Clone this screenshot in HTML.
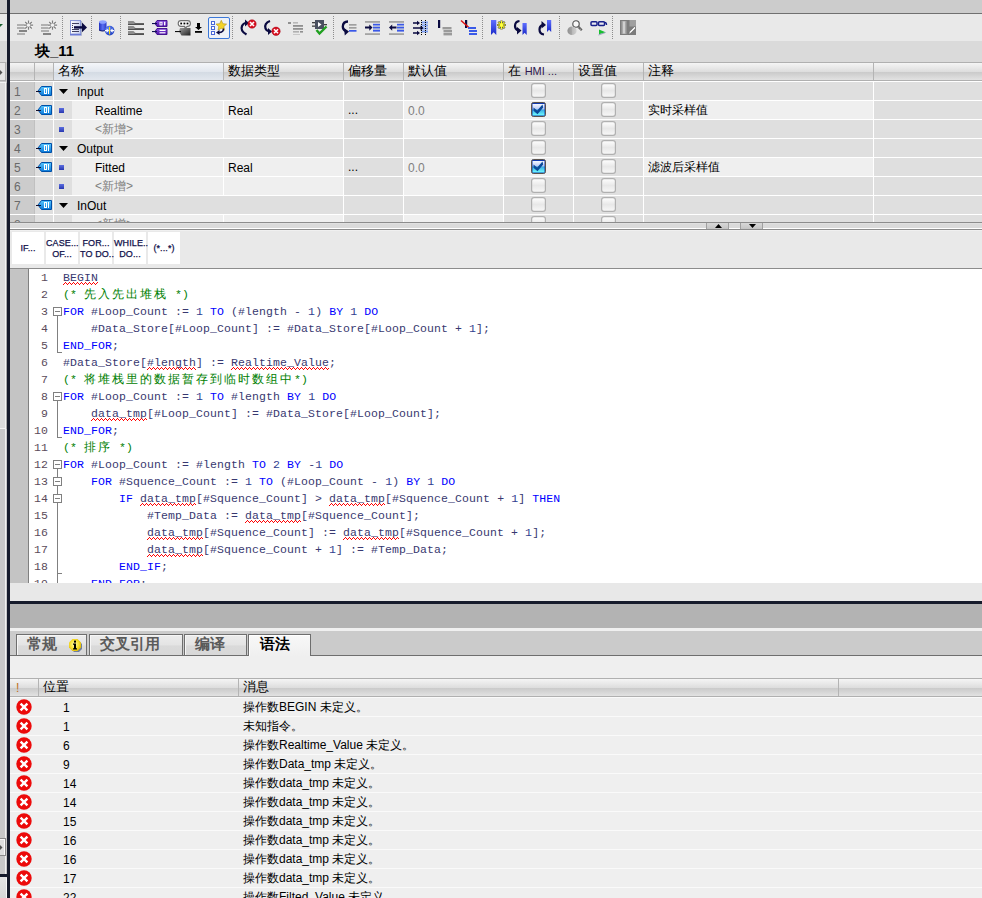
<!DOCTYPE html><html><head><meta charset="utf-8"><style>
*{margin:0;padding:0;box-sizing:border-box}
html,body{width:982px;height:898px;overflow:hidden;background:#c8c8c8;font-family:"Liberation Sans",sans-serif;font-size:11px;color:#000}
.a{position:absolute}
.t{position:absolute;white-space:pre;line-height:1}
svg{position:absolute;overflow:visible}

.code{font-family:"Liberation Mono",monospace;font-size:11.5px;letter-spacing:0.1px;color:#383870}
.ln{font-family:"Liberation Mono",monospace;font-size:11.5px;letter-spacing:0.1px;color:#5a4a5a}
.kw{color:#0000ff}
.nm{color:#304090}
.sq{}
.cj{display:inline-block;width:14px;font-size:12px;letter-spacing:0}
</style></head><body><div class="a" style="left:0px;top:0px;width:7px;height:13px;background:#cccccc"></div><div class="a" style="left:0px;top:13px;width:7px;height:1px;background:#707070"></div><div class="a" style="left:0px;top:14px;width:7px;height:27px;background:#e8e8e8"></div><div class="a" style="left:0px;top:41px;width:7px;height:21px;background:#d8d8d8"></div><div class="a" style="left:0px;top:62px;width:6px;height:19px;background:#e4e4e4;border:1px solid #b0b0b0;border-left:none"></div><div class="a" style="left:0px;top:82px;width:6px;height:347px;background:#dcdcdc;border:1px solid #f4f4f4;border-left:none;box-shadow:1px 1px 0 #a8a8a8"></div><div class="a" style="left:0px;top:429px;width:7px;height:445px;background:#c8c8c8"></div><div class="a" style="left:5px;top:429px;width:1px;height:445px;background:#f0f0f0"></div><div class="a" style="left:0px;top:838px;width:6px;height:18px;background:#dedede;border:1px solid #8a8a8a;border-left:none;box-shadow:inset -1px 1px 0 #fafafa"></div><div class="a" style="left:0px;top:874px;width:7px;height:3px;background:#161b2b"></div><div class="a" style="left:0px;top:877px;width:7px;height:21px;background:linear-gradient(#e4e4e4,#d8d8d8)"></div><div class="a" style="left:6px;top:878px;width:1px;height:20px;background:#f8f8f8"></div><svg style="left:0px;top:24px" width="3" height="4"><path d="M0 0H3L0 3Z" fill="#1a6030"/></svg><svg style="left:0px;top:70px" width="3" height="5"><path d="M0 0L2.5 2.5L0 5Z" fill="#505050"/></svg><svg style="left:0px;top:845px" width="3" height="5"><path d="M0 0L2.5 2.5L0 5Z" fill="#505050"/></svg><div class="a" style="left:7px;top:0px;width:3px;height:898px;background:#161b2b"></div><div class="a" style="left:10px;top:0px;width:972px;height:13px;background:#cccccc"></div><div class="a" style="left:10px;top:13px;width:972px;height:1px;background:#707070"></div><div class="a" style="left:10px;top:14px;width:972px;height:27px;background:#e9e9e9"></div><svg style="left:17px;top:20px" width="18" height="16" viewBox="0 0 18 16"><rect x="0" y="4" width="8" height="2" fill="#b0b0b0"/><rect x="0" y="7" width="8" height="2" fill="#b0b0b0"/><rect x="2" y="10" width="8" height="2" fill="#848484"/><rect x="0" y="13" width="8" height="2" fill="#b0b0b0"/><circle cx="11.5" cy="5.2" r="4.6" fill="#f4f4f4" opacity="0.9"/><path d="M13.10 5.20L16.10 5.20M12.63 6.33L14.75 8.45M11.50 6.80L11.50 9.80M10.37 6.33L8.25 8.45M9.90 5.20L6.90 5.20M10.37 4.07L8.25 1.95M11.50 3.60L11.50 0.60M12.63 4.07L14.75 1.95" stroke="#7c7c7c" stroke-width="1.25"/></svg><svg style="left:41px;top:20px" width="18" height="16" viewBox="0 0 18 16"><rect x="0" y="4" width="8" height="2" fill="#b0b0b0"/><rect x="0" y="7" width="8" height="2" fill="#b0b0b0"/><rect x="0" y="10" width="8" height="2" fill="#b0b0b0"/><rect x="2" y="13" width="8" height="2" fill="#848484"/><circle cx="11.5" cy="5.2" r="4.6" fill="#f4f4f4" opacity="0.9"/><path d="M13.10 5.20L16.10 5.20M12.63 6.33L14.75 8.45M11.50 6.80L11.50 9.80M10.37 6.33L8.25 8.45M9.90 5.20L6.90 5.20M10.37 4.07L8.25 1.95M11.50 3.60L11.50 0.60M12.63 4.07L14.75 1.95" stroke="#7c7c7c" stroke-width="1.25"/></svg><div class="a" style="left:62px;top:16px;width:1px;height:23px;background:repeating-linear-gradient(#8c8c8c 0 1px,transparent 1px 2px)"></div><svg style="left:70px;top:20px" width="18" height="16" viewBox="0 0 18 16">
<defs><linearGradient id="dag" x1="0" x2="1"><stop offset="0" stop-color="#ffffff"/><stop offset="1" stop-color="#c8d0f0"/></linearGradient></defs>
<rect x="0.5" y="0.5" width="10" height="13.5" fill="url(#dag)" stroke="#8a98d8"/>
<rect x="0" y="14" width="11.5" height="1.5" fill="#6a7ad8"/>
<path d="M11.5 1 V15.5" stroke="#a8b0c8" fill="none"/>
<rect x="2" y="3" width="7" height="1" fill="#404060"/>
<rect x="2" y="5" width="1" height="1" fill="#404060"/>
<rect x="2" y="7" width="1" height="1" fill="#404060"/>
<rect x="2" y="9" width="7" height="1" fill="#404060"/>
<rect x="2" y="11" width="7" height="1" fill="#404060"/>
<rect x="4" y="6.2" width="9" height="2.4" fill="#0a0a40"/>
<path d="M12 2.5 L17 7.4 L12 12.3Z" fill="#0a0a40"/>
</svg><div class="a" style="left:91px;top:16px;width:1px;height:23px;background:repeating-linear-gradient(#8c8c8c 0 1px,transparent 1px 2px)"></div><svg style="left:99px;top:20px" width="18" height="16" viewBox="0 0 18 16">
<defs><linearGradient id="dbg" x1="0" x2="1"><stop offset="0" stop-color="#2030c0"/><stop offset="0.5" stop-color="#5a70f0"/><stop offset="1" stop-color="#2838c8"/></linearGradient>
<radialGradient id="dbc" cx="0.4" cy="0.35" r="0.7"><stop offset="0" stop-color="#6a90ff"/><stop offset="1" stop-color="#1838c0"/></radialGradient></defs>
<path d="M0 2 V10 Q3.5 12 7.5 10 V2 Z" fill="url(#dbg)"/>
<ellipse cx="3.75" cy="2" rx="3.75" ry="1.8" fill="#8aa0ff"/>
<path d="M0 9.5 Q3.5 11.5 7.5 9.5 V10.5 Q3.5 12.5 0 10.5Z" fill="#101870"/>
<circle cx="10.6" cy="10.6" r="4.8" fill="url(#dbc)"/>
<path d="M6 10.6H9.2M12 10.6H15.2" stroke="#fff" stroke-width="1.3" fill="none"/>
<path d="M7.6 8.4L10 10.6L7.6 12.8Z M13.6 8.4L11.2 10.6L13.6 12.8Z" fill="#fff"/>
<rect x="10.1" y="6.8" width="1" height="7.6" fill="#ffe000"/>
</svg><div class="a" style="left:120px;top:16px;width:1px;height:23px;background:repeating-linear-gradient(#8c8c8c 0 1px,transparent 1px 2px)"></div><svg style="left:128px;top:20px" width="17" height="16" viewBox="0 0 17 16"><path d="M0 1 H5.5 L7.5 3 V5 H0Z" fill="#8e8e8e"/><rect x="6.5" y="3" width="9.5" height="2" fill="#636363"/><rect x="0" y="4" width="16" height="1" fill="#505050"/><path d="M0 6 H5.5 L7.5 8 V10 H0Z" fill="#8e8e8e"/><rect x="6.5" y="8" width="9.5" height="2" fill="#636363"/><rect x="0" y="9" width="16" height="1" fill="#505050"/><path d="M0 11 H5.5 L7.5 13 V15 H0Z" fill="#8e8e8e"/><rect x="6.5" y="13" width="9.5" height="2" fill="#636363"/><rect x="0" y="14" width="16" height="1" fill="#505050"/></svg><svg style="left:152px;top:20px" width="17" height="16" viewBox="0 0 17 16"><defs><linearGradient id="ptg" x1="0" y1="0" x2="0" y2="1"><stop offset="0" stop-color="#8a50e0"/><stop offset="1" stop-color="#5010a8"/></linearGradient></defs><path d="M5 0.5 H15 V6.5 H5 L3 3.5Z" fill="url(#ptg)" stroke="#3a0888" stroke-width="0.9"/><rect x="0" y="3" width="5" height="1.1" fill="#101050"/><path d="M5 8.5 H15 V14.5 H5 L3 11.5Z" fill="url(#ptg)" stroke="#3a0888" stroke-width="0.9"/><rect x="0" y="11" width="5" height="1.1" fill="#101050"/><rect x="7.5" y="1.8" width="3" height="3.6" fill="#fff"/><rect x="8.5" y="2.7" width="1" height="1.8" fill="#6a30c0"/><rect x="12" y="1.8" width="1.4" height="3.6" fill="#fff"/><rect x="7.5" y="9.8" width="6" height="1.2" fill="#fff"/><rect x="7.5" y="12.2" width="6" height="1.2" fill="#fff"/></svg><svg style="left:175px;top:20px" width="28" height="16" viewBox="0 0 28 16">
<defs><linearGradient id="chb" x1="0" y1="0" x2="1" y2="1"><stop offset="0" stop-color="#a0a0a0"/><stop offset="1" stop-color="#202020"/></linearGradient></defs>
<path d="M5 8 H15.5 V15.5 H6.5 L4 11.5Z" fill="url(#chb)"/>
<path d="M6 0.6 H12.5 Q15.4 0.6 15.4 3.5 Q15.4 6.4 12.5 6.4 H12 L10 9 L9.8 6.4 H6 Q3.2 6.4 3.2 3.5 Q3.2 0.6 6 0.6Z" fill="#fff" stroke="#707070" stroke-width="1.1"/>
<rect x="5.3" y="2.6" width="1.8" height="1.8" fill="#000"/><rect x="8.5" y="2.6" width="1.8" height="1.8" fill="#000"/><rect x="11.6" y="2.6" width="1.8" height="1.8" fill="#000"/>
<rect x="0" y="11" width="6" height="1.1" fill="#101010"/>
<path d="M22 3 V7 H20 L23.5 10 L27 7 H25 V3Z" fill="#000"/>
<rect x="20" y="11" width="7" height="1.8" fill="#000"/>
</svg><div class="a" style="left:208px;top:17px;width:22px;height:22px;border:1.5px solid #3c78d8;border-radius:2px;background:#eef2f8"></div><svg style="left:210px;top:20px" width="17" height="16" viewBox="0 0 17 16">
<rect x="1.5" y="1.5" width="3" height="3" fill="#fff" stroke="#4a68d8"/>
<rect x="1.5" y="6.5" width="3" height="3" fill="#fff" stroke="#4a68d8"/>
<rect x="1.5" y="11.5" width="3" height="3" fill="#fff" stroke="#4a68d8"/>
<path d="M11.3 0.3 L12.9 3.7 L16.6 4.1 L13.8 6.6 L14.6 10.2 L11.3 8.3 L8 10.2 L8.8 6.6 L6 4.1 L9.7 3.7Z" fill="#f4d428" stroke="#b09018" stroke-width="0.6"/>
<path d="M13.5 8.5 Q13.5 12.5 9 12.5" stroke="#0a0a40" stroke-width="1.4" fill="none"/><path d="M6 12.5 L9.5 10 V15Z" fill="#0a0a40"/>
</svg><div class="a" style="left:232px;top:16px;width:1px;height:23px;background:repeating-linear-gradient(#8c8c8c 0 1px,transparent 1px 2px)"></div><svg style="left:239px;top:20px" width="18" height="16" viewBox="0 0 18 16">
<path d="M7.5 14.5 Q1 11 3 6 Q4.5 3 7 3" stroke="#0a0a40" stroke-width="2.2" fill="none"/>
<path d="M6 -0.5 L10 3 L6 6.5Z" fill="#0a0a40"/>
<circle cx="13" cy="4" r="4.2" fill="#d81020" stroke="#a00010" stroke-width="0.5"/>
<path d="M11 2L15 6M15 2L11 6" stroke="#fff" stroke-width="1.6"/>
</svg><svg style="left:263px;top:20px" width="18" height="16" viewBox="0 0 18 16">
<path d="M7 1 Q1 3 2.5 8.5 Q3.5 11 6 11.5" stroke="#0a0a40" stroke-width="2.2" fill="none"/>
<path d="M5 8 L9 11.5 L5 15Z" fill="#0a0a40"/>
<circle cx="13" cy="11.3" r="4.2" fill="#d81020" stroke="#a00010" stroke-width="0.5"/>
<path d="M11 9.3L15 13.3M15 9.3L11 13.3" stroke="#fff" stroke-width="1.6"/>
</svg><svg style="left:288px;top:20px" width="17" height="16" viewBox="0 0 17 16">
<rect x="0" y="2" width="3" height="2" fill="#909090"/>
<rect x="5" y="2" width="5" height="1.6" fill="#b8b8b8"/>
<rect x="5" y="5" width="10" height="1.8" fill="#909090"/>
<rect x="5" y="8" width="10" height="1.8" fill="#909090"/>
<rect x="5" y="11" width="6" height="1.6" fill="#b0b0b0"/><rect x="12" y="11" width="3" height="1.6" fill="#909090"/>
<rect x="5" y="14" width="7" height="0.8" fill="#c0c0c0"/>
</svg><svg style="left:312px;top:20px" width="17" height="16" viewBox="0 0 17 16">
<rect x="3" y="0" width="9" height="9" fill="#4a5060"/>
<path d="M6 2 L9.5 4.5 L6 7Z" fill="#fff"/>
<rect x="0" y="2" width="3" height="1.3" fill="#404040"/><rect x="0" y="5.5" width="3" height="1.3" fill="#404040"/>
<rect x="12" y="4" width="3" height="1.3" fill="#404040"/>
<path d="M4.5 10 L7.5 13.5 L14.5 6.5" stroke="#20a020" stroke-width="2.4" fill="none"/>
</svg><div class="a" style="left:333px;top:16px;width:1px;height:23px;background:repeating-linear-gradient(#8c8c8c 0 1px,transparent 1px 2px)"></div><svg style="left:341px;top:20px" width="17" height="16" viewBox="0 0 17 16">
<path d="M7 1.5 Q2 1.5 1.8 6.5 Q1.8 9.5 4.5 11" stroke="#0a0a40" stroke-width="2.3" fill="none"/>
<path d="M3 8 L8 11.5 L3.8 15.5Z" fill="#0a0a40"/>
<rect x="8" y="4" width="7.5" height="1.7" fill="#a0a0a0"/>
<rect x="8" y="7" width="7.5" height="1.7" fill="#a0a0a0"/>
<rect x="8" y="10" width="7.5" height="1.7" fill="#3a58e8"/>
</svg><svg style="left:365px;top:20px" width="17" height="16" viewBox="0 0 17 16">
<rect x="0" y="1" width="15" height="1.8" fill="#a4a4a4"/>
<rect x="8" y="3.8" width="7" height="1.8" fill="#3a58e8"/>
<rect x="8" y="6.8" width="7" height="1.8" fill="#3a58e8"/>
<rect x="8" y="9.8" width="7" height="1.8" fill="#3a58e8"/>
<rect x="8" y="5.6" width="7" height="1.2" fill="#a8b4d8"/>
<rect x="8" y="8.6" width="7" height="1.2" fill="#a8b4d8"/>
<rect x="0" y="13.2" width="15" height="1.8" fill="#a4a4a4"/>
<path d="M0 6.6H4.3V4.5L7.5 7.6L4.3 10.7V8.6H0Z" fill="#0a0a40"/></svg><svg style="left:389px;top:20px" width="17" height="16" viewBox="0 0 17 16">
<rect x="0" y="1" width="15" height="1.8" fill="#a4a4a4"/>
<rect x="8" y="3.8" width="7" height="1.8" fill="#3a58e8"/>
<rect x="8" y="6.8" width="7" height="1.8" fill="#3a58e8"/>
<rect x="8" y="9.8" width="7" height="1.8" fill="#3a58e8"/>
<rect x="8" y="5.6" width="7" height="1.2" fill="#a8b4d8"/>
<rect x="8" y="8.6" width="7" height="1.2" fill="#a8b4d8"/>
<rect x="0" y="13.2" width="15" height="1.8" fill="#a4a4a4"/>
<path d="M7.5 6.6H3.2V4.5L0 7.6L3.2 10.7V8.6H7.5Z" fill="#0a0a40"/></svg><svg style="left:413px;top:20px" width="17" height="16" viewBox="0 0 17 16"><defs><pattern id="dotv" width="1" height="2" patternUnits="userSpaceOnUse"><rect width="1" height="1" fill="#000"/></pattern></defs><rect x="8.5" y="1.5" width="6.5" height="2" fill="#7f9ff0"/><rect x="8.5" y="4.5" width="6.5" height="2" fill="#7f9ff0"/><rect x="8.5" y="7.5" width="6.5" height="2" fill="#7f9ff0"/><rect x="8.5" y="10.5" width="6.5" height="2" fill="#7f9ff0"/><path d="M0 2.2H4V0.8L7 3L4 5.2V3.8H0Z" fill="#0a0a40"/><path d="M0 7.2H7.5V5.6L10.5 8L7.5 10.4V8.8H0Z" fill="#0a0a40"/><path d="M0 12.2H4V10.8L7 13L4 15.2V13.8H0Z" fill="#0a0a40"/><rect x="8" y="0" width="1" height="16" fill="url(#dotv)"/><rect x="12" y="0" width="1" height="16" fill="url(#dotv)"/></svg><svg style="left:438px;top:20px" width="17" height="16" viewBox="0 0 17 16">
<rect x="0" y="0" width="2.2" height="8" fill="#0a0a40"/>
<rect x="4.5" y="7" width="9" height="2.4" fill="#9a9a9a"/>
<rect x="5.5" y="10" width="8.5" height="2.4" fill="#9a9a9a"/>
<rect x="5.5" y="13" width="8.5" height="2.4" fill="#9a9a9a"/>
</svg><svg style="left:461px;top:20px" width="17" height="16" viewBox="0 0 17 16">
<rect x="4" y="0" width="2.2" height="8" fill="#0a0a40"/>
<path d="M0 0.5 L9 8.5" stroke="#e01010" stroke-width="1.5"/>
<rect x="7" y="7" width="8" height="2" fill="#3a5ae8"/>
<rect x="8" y="10" width="8" height="2" fill="#3a5ae8"/>
<rect x="8" y="13" width="8" height="2" fill="#3a5ae8"/>
</svg><div class="a" style="left:482px;top:16px;width:1px;height:23px;background:repeating-linear-gradient(#8c8c8c 0 1px,transparent 1px 2px)"></div><svg style="left:491px;top:20px" width="17" height="16" viewBox="0 0 17 16"><defs><linearGradient id="bmg" x1="0" y1="0" x2="0" y2="1"><stop offset="0" stop-color="#6070ff"/><stop offset="1" stop-color="#1828c8"/></linearGradient></defs>
<path d="M0 0H5.3V15L2.65 12.3L0 15Z" fill="url(#bmg)"/>
<path d="M10.5 0.5V9.5M6 5H15M7.3 1.8L13.7 8.2M13.7 1.8L7.3 8.2" stroke="#505040" stroke-width="2.2"/>
<path d="M10.5 0.8V9.2M6.3 5H14.7M7.6 2.1L13.4 7.9M13.4 2.1L7.6 7.9" stroke="#ffff20" stroke-width="1.1"/>
<circle cx="10.5" cy="5" r="1.6" fill="#ffff40"/>
</svg><svg style="left:514px;top:20px" width="17" height="16" viewBox="0 0 17 16"><defs><linearGradient id="bmg" x1="0" y1="0" x2="0" y2="1"><stop offset="0" stop-color="#6070ff"/><stop offset="1" stop-color="#1828c8"/></linearGradient></defs>
<path d="M8.5 3H12.7V15L10.6 12.8L8.5 15Z" fill="url(#bmg)"/>
<path d="M5.5 1 Q1 1.5 1 6 Q1 9 4 10.5" stroke="#0a0a40" stroke-width="2.2" fill="none"/>
<path d="M3 7 L7.5 10.5 L3 14.5Z" fill="#0a0a40"/>
</svg><svg style="left:538px;top:20px" width="17" height="16" viewBox="0 0 17 16"><defs><linearGradient id="bmg" x1="0" y1="0" x2="0" y2="1"><stop offset="0" stop-color="#6070ff"/><stop offset="1" stop-color="#1828c8"/></linearGradient></defs>
<path d="M9 0H13.2V12L11.1 9.8L9 12Z" fill="url(#bmg)"/>
<path d="M6 14.5 Q1.5 14 1.5 9.5 Q1.5 6 4.5 5" stroke="#0a0a40" stroke-width="2.2" fill="none"/>
<path d="M3.5 1 L8 5 L3.5 8.5Z" fill="#0a0a40"/>
</svg><div class="a" style="left:559px;top:16px;width:1px;height:23px;background:repeating-linear-gradient(#8c8c8c 0 1px,transparent 1px 2px)"></div><svg style="left:567px;top:20px" width="17" height="16" viewBox="0 0 17 16">
<defs><linearGradient id="mgb" x1="0" x2="1"><stop offset="0" stop-color="#909090"/><stop offset="0.5" stop-color="#a8a8a8"/><stop offset="0.5" stop-color="#b8b8b8"/><stop offset="1" stop-color="#d0d0d0"/></linearGradient></defs>
<circle cx="9" cy="4" r="3.2" fill="#f8f8f8" stroke="#505050" stroke-width="1.1"/>
<path d="M11.2 6.6 L14.8 10.2" stroke="#606060" stroke-width="2.2"/>
<path d="M11.6 7.4 L14.2 10" stroke="#d0d0d0" stroke-width="0.8" stroke-dasharray="1 1"/>
<ellipse cx="5" cy="10.8" rx="4.6" ry="4.3" fill="url(#mgb)"/>
</svg><svg style="left:590px;top:20px" width="18" height="16" viewBox="0 0 18 16">
<rect x="1" y="1.8" width="6" height="3.8" rx="1" fill="#e8e8f0" stroke="#18208a" stroke-width="1.5"/>
<rect x="8.5" y="1.8" width="6" height="3.8" rx="1" fill="#e8e8f0" stroke="#18208a" stroke-width="1.5"/>
<path d="M14.5 2.5 Q16.5 2.3 16.5 5" stroke="#18208a" stroke-width="1.4" fill="none"/>
<path d="M9 9.5 L15.5 12.3 L9 14.2Z" fill="#18c030"/>
<path d="M8.5 15 L15.5 12.5" stroke="#8090b0" stroke-width="0.8"/>
</svg><div class="a" style="left:612px;top:16px;width:1px;height:23px;background:repeating-linear-gradient(#8c8c8c 0 1px,transparent 1px 2px)"></div><svg style="left:620px;top:20px" width="17" height="16" viewBox="0 0 17 16">
<rect x="0" y="0" width="16" height="15" fill="#7c7c7c"/>
<rect x="1.5" y="1" width="5" height="13" fill="#a8a8a8"/>
<rect x="3" y="1.5" width="2" height="12" fill="#d0d0d0"/>
<rect x="9.5" y="0" width="6.5" height="6.5" fill="#a0a0a0"/>
<path d="M8.5 14.5 L9.5 11.5 L14.5 6.5 L16 8 L11 13Z" fill="#f0f0f0" stroke="#606060" stroke-width="0.6"/>
</svg><div class="a" style="left:10px;top:41px;width:972px;height:21px;background:#dadada"></div><div class="t" style="left:35px;top:43px;font-size:15px;font-weight:bold">块_11</div><div class="a" style="left:10px;top:62px;width:972px;height:1px;background:#b0b0b0"></div><div class="a" style="left:10px;top:63px;width:972px;height:17px;background:linear-gradient(#f5f5f5,#dedede 50%,#cbcbcb 56%,#e2e2e2)"></div><div class="a" style="left:54px;top:63px;width:169px;height:17px;background:linear-gradient(#f4f6f9,#e2e7ee 50%,#d4dbe4 56%,#e2e7ee)"></div><div class="a" style="left:10px;top:80px;width:972px;height:1px;background:#b0b0b0"></div><div class="a" style="left:34px;top:63px;width:1px;height:17px;background:#b4b4b4"></div><div class="a" style="left:53px;top:63px;width:1px;height:17px;background:#b4b4b4"></div><div class="a" style="left:223px;top:63px;width:1px;height:17px;background:#b4b4b4"></div><div class="a" style="left:343px;top:63px;width:1px;height:17px;background:#b4b4b4"></div><div class="a" style="left:403px;top:63px;width:1px;height:17px;background:#b4b4b4"></div><div class="a" style="left:503px;top:63px;width:1px;height:17px;background:#b4b4b4"></div><div class="a" style="left:573px;top:63px;width:1px;height:17px;background:#b4b4b4"></div><div class="a" style="left:643px;top:63px;width:1px;height:17px;background:#b4b4b4"></div><div class="a" style="left:873px;top:63px;width:1px;height:17px;background:#b4b4b4"></div><div class="t" style="left:58px;top:64px;font-size:13px">名称</div><div class="t" style="left:228px;top:64px;font-size:13px">数据类型</div><div class="t" style="left:348px;top:64px;font-size:13px">偏移量</div><div class="t" style="left:408px;top:64px;font-size:13px">默认值</div><div class="t" style="left:508px;top:64px;font-size:13px">在 <span style="font-size:11px;color:#301850">HMI ...</span></div><div class="t" style="left:578px;top:64px;font-size:13px">设置值</div><div class="t" style="left:648px;top:64px;font-size:13px">注释</div><div class="a" style="left:10px;top:81px;width:972px;height:141px;background:#ffffff"></div><div class="a" style="left:10px;top:82px;width:24px;height:18px;background:#cccccc"></div><div class="a" style="left:34px;top:82px;width:1px;height:18px;background:#c0c0c0"></div><div class="a" style="left:35px;top:82px;width:18px;height:18px;background:#dfdfdf"></div><div class="a" style="left:54px;top:82px;width:170px;height:18px;background:#dfdfdf"></div><div class="a" style="left:224px;top:82px;width:119px;height:18px;background:#dfdfdf"></div><div class="a" style="left:344px;top:82px;width:59px;height:18px;background:#dfdfdf"></div><div class="a" style="left:404px;top:82px;width:99px;height:18px;background:#dfdfdf"></div><div class="a" style="left:504px;top:82px;width:69px;height:18px;background:#dfdfdf"></div><div class="a" style="left:574px;top:82px;width:69px;height:18px;background:#dfdfdf"></div><div class="a" style="left:644px;top:82px;width:229px;height:18px;background:#dfdfdf"></div><div class="a" style="left:874px;top:82px;width:108px;height:18px;background:#dfdfdf"></div><div class="a" style="left:10px;top:101px;width:24px;height:18px;background:#cccccc"></div><div class="a" style="left:34px;top:101px;width:1px;height:18px;background:#c0c0c0"></div><div class="a" style="left:35px;top:101px;width:18px;height:18px;background:#dfdfdf"></div><div class="a" style="left:54px;top:101px;width:18px;height:18px;background:#dfdfdf"></div><div class="a" style="left:72px;top:101px;width:151px;height:18px;background:#efefef"></div><div class="a" style="left:224px;top:101px;width:119px;height:18px;background:#efefef"></div><div class="a" style="left:344px;top:101px;width:59px;height:18px;background:#dfdfdf"></div><div class="a" style="left:404px;top:101px;width:99px;height:18px;background:#efefef"></div><div class="a" style="left:504px;top:101px;width:69px;height:18px;background:#efefef"></div><div class="a" style="left:574px;top:101px;width:69px;height:18px;background:#dfdfdf"></div><div class="a" style="left:644px;top:101px;width:229px;height:18px;background:#efefef"></div><div class="a" style="left:874px;top:101px;width:108px;height:18px;background:#dfdfdf"></div><div class="a" style="left:10px;top:120px;width:24px;height:18px;background:#cccccc"></div><div class="a" style="left:34px;top:120px;width:1px;height:18px;background:#c0c0c0"></div><div class="a" style="left:35px;top:120px;width:18px;height:18px;background:#dfdfdf"></div><div class="a" style="left:54px;top:120px;width:18px;height:18px;background:#dfdfdf"></div><div class="a" style="left:72px;top:120px;width:151px;height:18px;background:#efefef"></div><div class="a" style="left:224px;top:120px;width:119px;height:18px;background:#efefef"></div><div class="a" style="left:344px;top:120px;width:59px;height:18px;background:#dfdfdf"></div><div class="a" style="left:404px;top:120px;width:99px;height:18px;background:#efefef"></div><div class="a" style="left:504px;top:120px;width:69px;height:18px;background:#dfdfdf"></div><div class="a" style="left:574px;top:120px;width:69px;height:18px;background:#dfdfdf"></div><div class="a" style="left:644px;top:120px;width:229px;height:18px;background:#dfdfdf"></div><div class="a" style="left:874px;top:120px;width:108px;height:18px;background:#dfdfdf"></div><div class="a" style="left:10px;top:139px;width:24px;height:18px;background:#cccccc"></div><div class="a" style="left:34px;top:139px;width:1px;height:18px;background:#c0c0c0"></div><div class="a" style="left:35px;top:139px;width:18px;height:18px;background:#dfdfdf"></div><div class="a" style="left:54px;top:139px;width:170px;height:18px;background:#dfdfdf"></div><div class="a" style="left:224px;top:139px;width:119px;height:18px;background:#dfdfdf"></div><div class="a" style="left:344px;top:139px;width:59px;height:18px;background:#dfdfdf"></div><div class="a" style="left:404px;top:139px;width:99px;height:18px;background:#dfdfdf"></div><div class="a" style="left:504px;top:139px;width:69px;height:18px;background:#dfdfdf"></div><div class="a" style="left:574px;top:139px;width:69px;height:18px;background:#dfdfdf"></div><div class="a" style="left:644px;top:139px;width:229px;height:18px;background:#dfdfdf"></div><div class="a" style="left:874px;top:139px;width:108px;height:18px;background:#dfdfdf"></div><div class="a" style="left:10px;top:158px;width:24px;height:18px;background:#cccccc"></div><div class="a" style="left:34px;top:158px;width:1px;height:18px;background:#c0c0c0"></div><div class="a" style="left:35px;top:158px;width:18px;height:18px;background:#dfdfdf"></div><div class="a" style="left:54px;top:158px;width:18px;height:18px;background:#dfdfdf"></div><div class="a" style="left:72px;top:158px;width:151px;height:18px;background:#efefef"></div><div class="a" style="left:224px;top:158px;width:119px;height:18px;background:#efefef"></div><div class="a" style="left:344px;top:158px;width:59px;height:18px;background:#dfdfdf"></div><div class="a" style="left:404px;top:158px;width:99px;height:18px;background:#efefef"></div><div class="a" style="left:504px;top:158px;width:69px;height:18px;background:#efefef"></div><div class="a" style="left:574px;top:158px;width:69px;height:18px;background:#dfdfdf"></div><div class="a" style="left:644px;top:158px;width:229px;height:18px;background:#efefef"></div><div class="a" style="left:874px;top:158px;width:108px;height:18px;background:#dfdfdf"></div><div class="a" style="left:10px;top:177px;width:24px;height:18px;background:#cccccc"></div><div class="a" style="left:34px;top:177px;width:1px;height:18px;background:#c0c0c0"></div><div class="a" style="left:35px;top:177px;width:18px;height:18px;background:#dfdfdf"></div><div class="a" style="left:54px;top:177px;width:18px;height:18px;background:#dfdfdf"></div><div class="a" style="left:72px;top:177px;width:151px;height:18px;background:#efefef"></div><div class="a" style="left:224px;top:177px;width:119px;height:18px;background:#efefef"></div><div class="a" style="left:344px;top:177px;width:59px;height:18px;background:#dfdfdf"></div><div class="a" style="left:404px;top:177px;width:99px;height:18px;background:#efefef"></div><div class="a" style="left:504px;top:177px;width:69px;height:18px;background:#dfdfdf"></div><div class="a" style="left:574px;top:177px;width:69px;height:18px;background:#dfdfdf"></div><div class="a" style="left:644px;top:177px;width:229px;height:18px;background:#dfdfdf"></div><div class="a" style="left:874px;top:177px;width:108px;height:18px;background:#dfdfdf"></div><div class="a" style="left:10px;top:196px;width:24px;height:18px;background:#cccccc"></div><div class="a" style="left:34px;top:196px;width:1px;height:18px;background:#c0c0c0"></div><div class="a" style="left:35px;top:196px;width:18px;height:18px;background:#dfdfdf"></div><div class="a" style="left:54px;top:196px;width:170px;height:18px;background:#dfdfdf"></div><div class="a" style="left:224px;top:196px;width:119px;height:18px;background:#dfdfdf"></div><div class="a" style="left:344px;top:196px;width:59px;height:18px;background:#dfdfdf"></div><div class="a" style="left:404px;top:196px;width:99px;height:18px;background:#dfdfdf"></div><div class="a" style="left:504px;top:196px;width:69px;height:18px;background:#dfdfdf"></div><div class="a" style="left:574px;top:196px;width:69px;height:18px;background:#dfdfdf"></div><div class="a" style="left:644px;top:196px;width:229px;height:18px;background:#dfdfdf"></div><div class="a" style="left:874px;top:196px;width:108px;height:18px;background:#dfdfdf"></div><div class="a" style="left:10px;top:215px;width:24px;height:8px;background:#cccccc"></div><div class="a" style="left:34px;top:215px;width:1px;height:8px;background:#c0c0c0"></div><div class="a" style="left:35px;top:215px;width:18px;height:8px;background:#dfdfdf"></div><div class="a" style="left:54px;top:215px;width:18px;height:8px;background:#dfdfdf"></div><div class="a" style="left:72px;top:215px;width:151px;height:8px;background:#efefef"></div><div class="a" style="left:224px;top:215px;width:119px;height:8px;background:#efefef"></div><div class="a" style="left:344px;top:215px;width:59px;height:8px;background:#dfdfdf"></div><div class="a" style="left:404px;top:215px;width:99px;height:8px;background:#efefef"></div><div class="a" style="left:504px;top:215px;width:69px;height:8px;background:#dfdfdf"></div><div class="a" style="left:574px;top:215px;width:69px;height:8px;background:#dfdfdf"></div><div class="a" style="left:644px;top:215px;width:229px;height:8px;background:#dfdfdf"></div><div class="a" style="left:874px;top:215px;width:108px;height:8px;background:#dfdfdf"></div><div class="t" style="left:14px;top:86px;color:#6a6a6a;font-size:12px">1</div><svg style="left:36px;top:86px" width="17" height="11" viewBox="0 0 17 11">
<defs><linearGradient id="tg" x1="0" y1="0" x2="0" y2="1"><stop offset="0" stop-color="#5ac8ff"/><stop offset="1" stop-color="#0a78d8"/></linearGradient></defs>
<path d="M5.5 0.5 H15.5 V9.5 H5.5 L2 5 Z" fill="url(#tg)" stroke="#0050a8" stroke-width="1"/>
<rect x="0" y="5" width="5" height="1" fill="#101030"/>
<rect x="8.5" y="2.5" width="2" height="5" fill="none" stroke="#fff" stroke-width="1"/>
<rect x="12" y="2" width="1" height="6" fill="#fff"/>
</svg><svg style="left:59px;top:89px" width="9" height="5"><path d="M0 0H9L4.5 5Z" fill="#000"/></svg><div class="t" style="left:77px;top:86px;font-size:12px">Input</div><svg style="left:531px;top:83px" width="15" height="15" viewBox="0 0 15 15">
<defs><linearGradient id="cbu" x1="0" y1="0" x2="0" y2="1"><stop offset="0" stop-color="#ffffff"/><stop offset="0.5" stop-color="#e8e8e8"/><stop offset="1" stop-color="#f8f8f8"/></linearGradient></defs>
<rect x="0.6" y="0.6" width="13.8" height="13.8" rx="2.4" fill="url(#cbu)" stroke="#b0b0b0" stroke-width="1.2"/>
</svg><svg style="left:601px;top:83px" width="15" height="15" viewBox="0 0 15 15">
<defs><linearGradient id="cbu" x1="0" y1="0" x2="0" y2="1"><stop offset="0" stop-color="#ffffff"/><stop offset="0.5" stop-color="#e8e8e8"/><stop offset="1" stop-color="#f8f8f8"/></linearGradient></defs>
<rect x="0.6" y="0.6" width="13.8" height="13.8" rx="2.4" fill="url(#cbu)" stroke="#b0b0b0" stroke-width="1.2"/>
</svg><div class="t" style="left:14px;top:105px;color:#6a6a6a;font-size:12px">2</div><svg style="left:36px;top:105px" width="17" height="11" viewBox="0 0 17 11">
<defs><linearGradient id="tg" x1="0" y1="0" x2="0" y2="1"><stop offset="0" stop-color="#5ac8ff"/><stop offset="1" stop-color="#0a78d8"/></linearGradient></defs>
<path d="M5.5 0.5 H15.5 V9.5 H5.5 L2 5 Z" fill="url(#tg)" stroke="#0050a8" stroke-width="1"/>
<rect x="0" y="5" width="5" height="1" fill="#101030"/>
<rect x="8.5" y="2.5" width="2" height="5" fill="none" stroke="#fff" stroke-width="1"/>
<rect x="12" y="2" width="1" height="6" fill="#fff"/>
</svg><div class="a" style="left:59px;top:108px;width:5px;height:5px;background:linear-gradient(#5c6ee0,#2838b0)"></div><div class="t" style="left:95px;top:105px;font-size:12px">Realtime</div><div class="t" style="left:228px;top:105px;font-size:12px">Real</div><div class="t" style="left:348px;top:104px;font-size:12px">...</div><div class="t" style="left:408px;top:105px;color:#808080;font-size:12px">0.0</div><div class="t" style="left:648px;top:104px;font-size:12px">实时采样值</div><svg style="left:531px;top:102px" width="15" height="15" viewBox="0 0 15 15">
<defs><linearGradient id="cbc" x1="0" y1="0" x2="0" y2="1"><stop offset="0" stop-color="#f4f8ff"/><stop offset="0.45" stop-color="#b8c8f8"/><stop offset="0.5" stop-color="#3aa8e0"/><stop offset="1" stop-color="#70ffff"/></linearGradient></defs>
<rect x="0.5" y="0.5" width="14" height="14" rx="2" fill="#1038b0" stroke="#5a524c"/>
<rect x="1.5" y="2" width="12" height="11.5" fill="url(#cbc)"/>
<path d="M2.5 5.6 L6.2 8.6 L11.5 2.4 L12.2 5.6 L6.5 12.3 L2.5 8.8Z" fill="#0a4a9a"/>
</svg><svg style="left:601px;top:102px" width="15" height="15" viewBox="0 0 15 15">
<defs><linearGradient id="cbu" x1="0" y1="0" x2="0" y2="1"><stop offset="0" stop-color="#ffffff"/><stop offset="0.5" stop-color="#e8e8e8"/><stop offset="1" stop-color="#f8f8f8"/></linearGradient></defs>
<rect x="0.6" y="0.6" width="13.8" height="13.8" rx="2.4" fill="url(#cbu)" stroke="#b0b0b0" stroke-width="1.2"/>
</svg><div class="t" style="left:14px;top:124px;color:#6a6a6a;font-size:12px">3</div><div class="a" style="left:59px;top:127px;width:5px;height:5px;background:linear-gradient(#5c6ee0,#2838b0)"></div><div class="t" style="left:95px;top:123px;color:#808080;font-size:12px">&lt;新增&gt;</div><svg style="left:531px;top:121px" width="15" height="15" viewBox="0 0 15 15">
<defs><linearGradient id="cbu" x1="0" y1="0" x2="0" y2="1"><stop offset="0" stop-color="#ffffff"/><stop offset="0.5" stop-color="#e8e8e8"/><stop offset="1" stop-color="#f8f8f8"/></linearGradient></defs>
<rect x="0.6" y="0.6" width="13.8" height="13.8" rx="2.4" fill="url(#cbu)" stroke="#b0b0b0" stroke-width="1.2"/>
</svg><svg style="left:601px;top:121px" width="15" height="15" viewBox="0 0 15 15">
<defs><linearGradient id="cbu" x1="0" y1="0" x2="0" y2="1"><stop offset="0" stop-color="#ffffff"/><stop offset="0.5" stop-color="#e8e8e8"/><stop offset="1" stop-color="#f8f8f8"/></linearGradient></defs>
<rect x="0.6" y="0.6" width="13.8" height="13.8" rx="2.4" fill="url(#cbu)" stroke="#b0b0b0" stroke-width="1.2"/>
</svg><div class="t" style="left:14px;top:143px;color:#6a6a6a;font-size:12px">4</div><svg style="left:36px;top:143px" width="17" height="11" viewBox="0 0 17 11">
<defs><linearGradient id="tg" x1="0" y1="0" x2="0" y2="1"><stop offset="0" stop-color="#5ac8ff"/><stop offset="1" stop-color="#0a78d8"/></linearGradient></defs>
<path d="M5.5 0.5 H15.5 V9.5 H5.5 L2 5 Z" fill="url(#tg)" stroke="#0050a8" stroke-width="1"/>
<rect x="0" y="5" width="5" height="1" fill="#101030"/>
<rect x="8.5" y="2.5" width="2" height="5" fill="none" stroke="#fff" stroke-width="1"/>
<rect x="12" y="2" width="1" height="6" fill="#fff"/>
</svg><svg style="left:59px;top:146px" width="9" height="5"><path d="M0 0H9L4.5 5Z" fill="#000"/></svg><div class="t" style="left:77px;top:143px;font-size:12px">Output</div><svg style="left:531px;top:140px" width="15" height="15" viewBox="0 0 15 15">
<defs><linearGradient id="cbu" x1="0" y1="0" x2="0" y2="1"><stop offset="0" stop-color="#ffffff"/><stop offset="0.5" stop-color="#e8e8e8"/><stop offset="1" stop-color="#f8f8f8"/></linearGradient></defs>
<rect x="0.6" y="0.6" width="13.8" height="13.8" rx="2.4" fill="url(#cbu)" stroke="#b0b0b0" stroke-width="1.2"/>
</svg><svg style="left:601px;top:140px" width="15" height="15" viewBox="0 0 15 15">
<defs><linearGradient id="cbu" x1="0" y1="0" x2="0" y2="1"><stop offset="0" stop-color="#ffffff"/><stop offset="0.5" stop-color="#e8e8e8"/><stop offset="1" stop-color="#f8f8f8"/></linearGradient></defs>
<rect x="0.6" y="0.6" width="13.8" height="13.8" rx="2.4" fill="url(#cbu)" stroke="#b0b0b0" stroke-width="1.2"/>
</svg><div class="t" style="left:14px;top:162px;color:#6a6a6a;font-size:12px">5</div><svg style="left:36px;top:162px" width="17" height="11" viewBox="0 0 17 11">
<defs><linearGradient id="tg" x1="0" y1="0" x2="0" y2="1"><stop offset="0" stop-color="#5ac8ff"/><stop offset="1" stop-color="#0a78d8"/></linearGradient></defs>
<path d="M5.5 0.5 H15.5 V9.5 H5.5 L2 5 Z" fill="url(#tg)" stroke="#0050a8" stroke-width="1"/>
<rect x="0" y="5" width="5" height="1" fill="#101030"/>
<rect x="8.5" y="2.5" width="2" height="5" fill="none" stroke="#fff" stroke-width="1"/>
<rect x="12" y="2" width="1" height="6" fill="#fff"/>
</svg><div class="a" style="left:59px;top:165px;width:5px;height:5px;background:linear-gradient(#5c6ee0,#2838b0)"></div><div class="t" style="left:95px;top:162px;font-size:12px">Fitted</div><div class="t" style="left:228px;top:162px;font-size:12px">Real</div><div class="t" style="left:348px;top:161px;font-size:12px">...</div><div class="t" style="left:408px;top:162px;color:#808080;font-size:12px">0.0</div><div class="t" style="left:648px;top:161px;font-size:12px">滤波后采样值</div><svg style="left:531px;top:159px" width="15" height="15" viewBox="0 0 15 15">
<defs><linearGradient id="cbc" x1="0" y1="0" x2="0" y2="1"><stop offset="0" stop-color="#f4f8ff"/><stop offset="0.45" stop-color="#b8c8f8"/><stop offset="0.5" stop-color="#3aa8e0"/><stop offset="1" stop-color="#70ffff"/></linearGradient></defs>
<rect x="0.5" y="0.5" width="14" height="14" rx="2" fill="#1038b0" stroke="#5a524c"/>
<rect x="1.5" y="2" width="12" height="11.5" fill="url(#cbc)"/>
<path d="M2.5 5.6 L6.2 8.6 L11.5 2.4 L12.2 5.6 L6.5 12.3 L2.5 8.8Z" fill="#0a4a9a"/>
</svg><svg style="left:601px;top:159px" width="15" height="15" viewBox="0 0 15 15">
<defs><linearGradient id="cbu" x1="0" y1="0" x2="0" y2="1"><stop offset="0" stop-color="#ffffff"/><stop offset="0.5" stop-color="#e8e8e8"/><stop offset="1" stop-color="#f8f8f8"/></linearGradient></defs>
<rect x="0.6" y="0.6" width="13.8" height="13.8" rx="2.4" fill="url(#cbu)" stroke="#b0b0b0" stroke-width="1.2"/>
</svg><div class="t" style="left:14px;top:181px;color:#6a6a6a;font-size:12px">6</div><div class="a" style="left:59px;top:184px;width:5px;height:5px;background:linear-gradient(#5c6ee0,#2838b0)"></div><div class="t" style="left:95px;top:180px;color:#808080;font-size:12px">&lt;新增&gt;</div><svg style="left:531px;top:178px" width="15" height="15" viewBox="0 0 15 15">
<defs><linearGradient id="cbu" x1="0" y1="0" x2="0" y2="1"><stop offset="0" stop-color="#ffffff"/><stop offset="0.5" stop-color="#e8e8e8"/><stop offset="1" stop-color="#f8f8f8"/></linearGradient></defs>
<rect x="0.6" y="0.6" width="13.8" height="13.8" rx="2.4" fill="url(#cbu)" stroke="#b0b0b0" stroke-width="1.2"/>
</svg><svg style="left:601px;top:178px" width="15" height="15" viewBox="0 0 15 15">
<defs><linearGradient id="cbu" x1="0" y1="0" x2="0" y2="1"><stop offset="0" stop-color="#ffffff"/><stop offset="0.5" stop-color="#e8e8e8"/><stop offset="1" stop-color="#f8f8f8"/></linearGradient></defs>
<rect x="0.6" y="0.6" width="13.8" height="13.8" rx="2.4" fill="url(#cbu)" stroke="#b0b0b0" stroke-width="1.2"/>
</svg><div class="t" style="left:14px;top:200px;color:#6a6a6a;font-size:12px">7</div><svg style="left:36px;top:200px" width="17" height="11" viewBox="0 0 17 11">
<defs><linearGradient id="tg" x1="0" y1="0" x2="0" y2="1"><stop offset="0" stop-color="#5ac8ff"/><stop offset="1" stop-color="#0a78d8"/></linearGradient></defs>
<path d="M5.5 0.5 H15.5 V9.5 H5.5 L2 5 Z" fill="url(#tg)" stroke="#0050a8" stroke-width="1"/>
<rect x="0" y="5" width="5" height="1" fill="#101030"/>
<rect x="8.5" y="2.5" width="2" height="5" fill="none" stroke="#fff" stroke-width="1"/>
<rect x="12" y="2" width="1" height="6" fill="#fff"/>
</svg><svg style="left:59px;top:203px" width="9" height="5"><path d="M0 0H9L4.5 5Z" fill="#000"/></svg><div class="t" style="left:77px;top:200px;font-size:12px">InOut</div><svg style="left:531px;top:197px" width="15" height="15" viewBox="0 0 15 15">
<defs><linearGradient id="cbu" x1="0" y1="0" x2="0" y2="1"><stop offset="0" stop-color="#ffffff"/><stop offset="0.5" stop-color="#e8e8e8"/><stop offset="1" stop-color="#f8f8f8"/></linearGradient></defs>
<rect x="0.6" y="0.6" width="13.8" height="13.8" rx="2.4" fill="url(#cbu)" stroke="#b0b0b0" stroke-width="1.2"/>
</svg><svg style="left:601px;top:197px" width="15" height="15" viewBox="0 0 15 15">
<defs><linearGradient id="cbu" x1="0" y1="0" x2="0" y2="1"><stop offset="0" stop-color="#ffffff"/><stop offset="0.5" stop-color="#e8e8e8"/><stop offset="1" stop-color="#f8f8f8"/></linearGradient></defs>
<rect x="0.6" y="0.6" width="13.8" height="13.8" rx="2.4" fill="url(#cbu)" stroke="#b0b0b0" stroke-width="1.2"/>
</svg><div class="t" style="left:14px;top:219px;color:#6a6a6a;font-size:12px">8</div><div class="a" style="left:59px;top:222px;width:5px;height:5px;background:linear-gradient(#5c6ee0,#2838b0)"></div><div class="t" style="left:95px;top:218px;color:#808080;font-size:12px">&lt;新增&gt;</div><svg style="left:531px;top:216px" width="15" height="15" viewBox="0 0 15 15">
<defs><linearGradient id="cbu" x1="0" y1="0" x2="0" y2="1"><stop offset="0" stop-color="#ffffff"/><stop offset="0.5" stop-color="#e8e8e8"/><stop offset="1" stop-color="#f8f8f8"/></linearGradient></defs>
<rect x="0.6" y="0.6" width="13.8" height="13.8" rx="2.4" fill="url(#cbu)" stroke="#b0b0b0" stroke-width="1.2"/>
</svg><svg style="left:601px;top:216px" width="15" height="15" viewBox="0 0 15 15">
<defs><linearGradient id="cbu" x1="0" y1="0" x2="0" y2="1"><stop offset="0" stop-color="#ffffff"/><stop offset="0.5" stop-color="#e8e8e8"/><stop offset="1" stop-color="#f8f8f8"/></linearGradient></defs>
<rect x="0.6" y="0.6" width="13.8" height="13.8" rx="2.4" fill="url(#cbu)" stroke="#b0b0b0" stroke-width="1.2"/>
</svg><div class="a" style="left:10px;top:222px;width:972px;height:1px;background:#8c8c8c"></div><div class="a" style="left:10px;top:223px;width:972px;height:5px;background:linear-gradient(#e0e0e0 0 1px,#dadada 1px)"></div><div class="a" style="left:10px;top:228px;width:972px;height:1px;background:#ffffff"></div><div class="a" style="left:706px;top:223px;width:23px;height:6px;background:linear-gradient(#d8d8d8,#c4c4c4);border-left:1px solid #a0a0a0;border-right:1px solid #a0a0a0"></div><div class="a" style="left:740px;top:223px;width:23px;height:6px;background:linear-gradient(#d8d8d8,#c4c4c4);border-left:1px solid #a0a0a0;border-right:1px solid #a0a0a0"></div><svg style="left:715px;top:224px" width="7" height="4"><path d="M0 4H7L3.5 0Z" fill="#000"/></svg><svg style="left:749px;top:224px" width="7" height="4"><path d="M0 0H7L3.5 4Z" fill="#000"/></svg><div class="a" style="left:10px;top:229px;width:972px;height:1px;background:#8c8c8c"></div><div class="a" style="left:10px;top:230px;width:972px;height:38px;background:linear-gradient(#f0f0f0 0 1px,#e9e9e9 1px)"></div><div class="a" style="left:12px;top:232px;width:32px;height:32px;background:#fff"></div><div class="t" style="left:12px;top:244px;width:32px;text-align:center;font-size:9px;color:#10104a;-webkit-text-stroke:0.25px #10104a;letter-spacing:0.1px">IF...</div><div class="a" style="left:46px;top:232px;width:32px;height:32px;background:#fff"></div><div class="t" style="left:46px;top:239px;width:32px;text-align:center;font-size:9px;color:#10104a;-webkit-text-stroke:0.25px #10104a;letter-spacing:0.1px">CASE...</div><div class="t" style="left:46px;top:250px;width:32px;text-align:center;font-size:9px;color:#10104a;-webkit-text-stroke:0.25px #10104a;letter-spacing:0.1px">OF...</div><div class="a" style="left:80px;top:232px;width:32px;height:32px;background:#fff"></div><div class="t" style="left:80px;top:239px;width:32px;text-align:center;font-size:9px;color:#10104a;-webkit-text-stroke:0.25px #10104a;letter-spacing:0.1px">FOR...</div><div class="t" style="left:80px;top:250px;width:32px;text-align:center;font-size:9px;color:#10104a;-webkit-text-stroke:0.25px #10104a;letter-spacing:0.1px">TO DO...</div><div class="a" style="left:114px;top:232px;width:32px;height:32px;background:#fff"></div><div class="t" style="left:114px;top:239px;width:32px;text-align:center;font-size:9px;color:#10104a;-webkit-text-stroke:0.25px #10104a;letter-spacing:0.1px">WHILE...</div><div class="t" style="left:114px;top:250px;width:32px;text-align:center;font-size:9px;color:#10104a;-webkit-text-stroke:0.25px #10104a;letter-spacing:0.1px">DO...</div><div class="a" style="left:148px;top:232px;width:32px;height:32px;background:#fff"></div><div class="t" style="left:148px;top:244px;width:32px;text-align:center;font-size:9px;color:#10104a;-webkit-text-stroke:0.25px #10104a;letter-spacing:0.1px">(*...*)</div><div class="a" style="left:10px;top:268px;width:972px;height:1px;background:#8c8c8c"></div><div class="a" style="left:10px;top:269px;width:972px;height:314px;background:#fff"></div><div class="a" style="left:10px;top:269px;width:18px;height:314px;background:#c4c4c4"></div><div class="a" style="left:28px;top:269px;width:1px;height:314px;background:#808080"></div><div class="a" style="left:10px;top:269px;width:972px;height:314px;overflow:hidden"><div class="t ln" style="left:0px;top:3px;width:38px;text-align:right">1</div><div class="t code" style="left:53px;top:3px"><span class="sq">BEGIN</span></div><div class="t ln" style="left:0px;top:20px;width:38px;text-align:right">2</div><div class="t code" style="left:53px;top:20px"><span style="color:#008000">(* </span><span class="cj" style="color:#008000">先</span><span class="cj" style="color:#008000">入</span><span class="cj" style="color:#008000">先</span><span class="cj" style="color:#008000">出</span><span class="cj" style="color:#008000">堆</span><span class="cj" style="color:#008000">栈</span><span style="color:#008000"> *)</span></div><div class="t ln" style="left:0px;top:37px;width:38px;text-align:right">3</div><div class="t code" style="left:53px;top:37px"><span class="kw">FOR</span> #Loop_Count := <span class="nm">1</span> <span class="kw">TO</span> (#length - <span class="nm">1</span>) <span class="kw">BY</span> <span class="nm">1</span> <span class="kw">DO</span></div><div class="t ln" style="left:0px;top:54px;width:38px;text-align:right">4</div><div class="t code" style="left:53px;top:54px">    #Data_Store[#Loop_Count] := #Data_Store[#Loop_Count + <span class="nm">1</span>];</div><div class="t ln" style="left:0px;top:71px;width:38px;text-align:right">5</div><div class="t code" style="left:53px;top:71px"><span class="kw">END_FOR</span>;</div><div class="t ln" style="left:0px;top:88px;width:38px;text-align:right">6</div><div class="t code" style="left:53px;top:88px">#Data_Store[<span class="sq">#length</span>] := <span class="sq">Realtime_Value</span>;</div><div class="t ln" style="left:0px;top:105px;width:38px;text-align:right">7</div><div class="t code" style="left:53px;top:105px"><span style="color:#008000">(* </span><span class="cj" style="color:#008000">将</span><span class="cj" style="color:#008000">堆</span><span class="cj" style="color:#008000">栈</span><span class="cj" style="color:#008000">里</span><span class="cj" style="color:#008000">的</span><span class="cj" style="color:#008000">数</span><span class="cj" style="color:#008000">据</span><span class="cj" style="color:#008000">暂</span><span class="cj" style="color:#008000">存</span><span class="cj" style="color:#008000">到</span><span class="cj" style="color:#008000">临</span><span class="cj" style="color:#008000">时</span><span class="cj" style="color:#008000">数</span><span class="cj" style="color:#008000">组</span><span class="cj" style="color:#008000">中</span><span style="color:#008000">*)</span></div><div class="t ln" style="left:0px;top:122px;width:38px;text-align:right">8</div><div class="t code" style="left:53px;top:122px"><span class="kw">FOR</span> #Loop_Count := <span class="nm">1</span> <span class="kw">TO</span> #length <span class="kw">BY</span> <span class="nm">1</span> <span class="kw">DO</span></div><div class="t ln" style="left:0px;top:139px;width:38px;text-align:right">9</div><div class="t code" style="left:53px;top:139px">    <span class="sq">data_tmp</span>[#Loop_Count] := #Data_Store[#Loop_Count];</div><div class="t ln" style="left:0px;top:156px;width:38px;text-align:right">10</div><div class="t code" style="left:53px;top:156px"><span class="kw">END_FOR</span>;</div><div class="t ln" style="left:0px;top:173px;width:38px;text-align:right">11</div><div class="t code" style="left:53px;top:173px"><span style="color:#008000">(* </span><span class="cj" style="color:#008000">排</span><span class="cj" style="color:#008000">序</span><span style="color:#008000"> *)</span></div><div class="t ln" style="left:0px;top:190px;width:38px;text-align:right">12</div><div class="t code" style="left:53px;top:190px"><span class="kw">FOR</span> #Loop_Count := #length <span class="kw">TO</span> <span class="nm">2</span> <span class="kw">BY</span> -<span class="nm">1</span> <span class="kw">DO</span></div><div class="t ln" style="left:0px;top:207px;width:38px;text-align:right">13</div><div class="t code" style="left:53px;top:207px">    <span class="kw">FOR</span> #Squence_Count := <span class="nm">1</span> <span class="kw">TO</span> (#Loop_Count - <span class="nm">1</span>) <span class="kw">BY</span> <span class="nm">1</span> <span class="kw">DO</span></div><div class="t ln" style="left:0px;top:224px;width:38px;text-align:right">14</div><div class="t code" style="left:53px;top:224px">        <span class="kw">IF</span> <span class="sq">data_tmp</span>[#Squence_Count] &gt; <span class="sq">data_tmp</span>[#Squence_Count + <span class="nm">1</span>] <span class="kw">THEN</span></div><div class="t ln" style="left:0px;top:241px;width:38px;text-align:right">15</div><div class="t code" style="left:53px;top:241px">            #Temp_Data := <span class="sq">data_tmp</span>[#Squence_Count];</div><div class="t ln" style="left:0px;top:258px;width:38px;text-align:right">16</div><div class="t code" style="left:53px;top:258px">            <span class="sq">data_tmp</span>[#Squence_Count] := <span class="sq">data_tmp</span>[#Squence_Count + <span class="nm">1</span>];</div><div class="t ln" style="left:0px;top:275px;width:38px;text-align:right">17</div><div class="t code" style="left:53px;top:275px">            <span class="sq">data_tmp</span>[#Squence_Count + <span class="nm">1</span>] := #Temp_Data;</div><div class="t ln" style="left:0px;top:292px;width:38px;text-align:right">18</div><div class="t code" style="left:53px;top:292px">        <span class="kw">END_IF</span>;</div><div class="t ln" style="left:0px;top:309px;width:38px;text-align:right">19</div><div class="t code" style="left:53px;top:309px">    <span class="kw">END_FOR</span>;</div><svg style="left:53px;top:13px" width="35" height="3" viewBox="0 0 35 3"><path d="M0 2h1v1h-1zM1 1h1v1h-1zM2 0h1v1h-1zM3 1h1v1h-1zM4 2h1v1h-1zM5 1h1v1h-1zM6 0h1v1h-1zM7 1h1v1h-1zM8 2h1v1h-1zM9 1h1v1h-1zM10 0h1v1h-1zM11 1h1v1h-1zM12 2h1v1h-1zM13 1h1v1h-1zM14 0h1v1h-1zM15 1h1v1h-1zM16 2h1v1h-1zM17 1h1v1h-1zM18 0h1v1h-1zM19 1h1v1h-1zM20 2h1v1h-1zM21 1h1v1h-1zM22 0h1v1h-1zM23 1h1v1h-1zM24 2h1v1h-1zM25 1h1v1h-1zM26 0h1v1h-1zM27 1h1v1h-1zM28 2h1v1h-1zM29 1h1v1h-1zM30 0h1v1h-1zM31 1h1v1h-1zM32 2h1v1h-1zM33 1h1v1h-1zM34 0h1v1h-1z" fill="#ff0000" shape-rendering="crispEdges"/></svg><svg style="left:137px;top:98px" width="49" height="3" viewBox="0 0 49 3"><path d="M0 2h1v1h-1zM1 1h1v1h-1zM2 0h1v1h-1zM3 1h1v1h-1zM4 2h1v1h-1zM5 1h1v1h-1zM6 0h1v1h-1zM7 1h1v1h-1zM8 2h1v1h-1zM9 1h1v1h-1zM10 0h1v1h-1zM11 1h1v1h-1zM12 2h1v1h-1zM13 1h1v1h-1zM14 0h1v1h-1zM15 1h1v1h-1zM16 2h1v1h-1zM17 1h1v1h-1zM18 0h1v1h-1zM19 1h1v1h-1zM20 2h1v1h-1zM21 1h1v1h-1zM22 0h1v1h-1zM23 1h1v1h-1zM24 2h1v1h-1zM25 1h1v1h-1zM26 0h1v1h-1zM27 1h1v1h-1zM28 2h1v1h-1zM29 1h1v1h-1zM30 0h1v1h-1zM31 1h1v1h-1zM32 2h1v1h-1zM33 1h1v1h-1zM34 0h1v1h-1zM35 1h1v1h-1zM36 2h1v1h-1zM37 1h1v1h-1zM38 0h1v1h-1zM39 1h1v1h-1zM40 2h1v1h-1zM41 1h1v1h-1zM42 0h1v1h-1zM43 1h1v1h-1zM44 2h1v1h-1zM45 1h1v1h-1zM46 0h1v1h-1zM47 1h1v1h-1zM48 2h1v1h-1z" fill="#ff0000" shape-rendering="crispEdges"/></svg><svg style="left:221px;top:98px" width="98" height="3" viewBox="0 0 98 3"><path d="M0 2h1v1h-1zM1 1h1v1h-1zM2 0h1v1h-1zM3 1h1v1h-1zM4 2h1v1h-1zM5 1h1v1h-1zM6 0h1v1h-1zM7 1h1v1h-1zM8 2h1v1h-1zM9 1h1v1h-1zM10 0h1v1h-1zM11 1h1v1h-1zM12 2h1v1h-1zM13 1h1v1h-1zM14 0h1v1h-1zM15 1h1v1h-1zM16 2h1v1h-1zM17 1h1v1h-1zM18 0h1v1h-1zM19 1h1v1h-1zM20 2h1v1h-1zM21 1h1v1h-1zM22 0h1v1h-1zM23 1h1v1h-1zM24 2h1v1h-1zM25 1h1v1h-1zM26 0h1v1h-1zM27 1h1v1h-1zM28 2h1v1h-1zM29 1h1v1h-1zM30 0h1v1h-1zM31 1h1v1h-1zM32 2h1v1h-1zM33 1h1v1h-1zM34 0h1v1h-1zM35 1h1v1h-1zM36 2h1v1h-1zM37 1h1v1h-1zM38 0h1v1h-1zM39 1h1v1h-1zM40 2h1v1h-1zM41 1h1v1h-1zM42 0h1v1h-1zM43 1h1v1h-1zM44 2h1v1h-1zM45 1h1v1h-1zM46 0h1v1h-1zM47 1h1v1h-1zM48 2h1v1h-1zM49 1h1v1h-1zM50 0h1v1h-1zM51 1h1v1h-1zM52 2h1v1h-1zM53 1h1v1h-1zM54 0h1v1h-1zM55 1h1v1h-1zM56 2h1v1h-1zM57 1h1v1h-1zM58 0h1v1h-1zM59 1h1v1h-1zM60 2h1v1h-1zM61 1h1v1h-1zM62 0h1v1h-1zM63 1h1v1h-1zM64 2h1v1h-1zM65 1h1v1h-1zM66 0h1v1h-1zM67 1h1v1h-1zM68 2h1v1h-1zM69 1h1v1h-1zM70 0h1v1h-1zM71 1h1v1h-1zM72 2h1v1h-1zM73 1h1v1h-1zM74 0h1v1h-1zM75 1h1v1h-1zM76 2h1v1h-1zM77 1h1v1h-1zM78 0h1v1h-1zM79 1h1v1h-1zM80 2h1v1h-1zM81 1h1v1h-1zM82 0h1v1h-1zM83 1h1v1h-1zM84 2h1v1h-1zM85 1h1v1h-1zM86 0h1v1h-1zM87 1h1v1h-1zM88 2h1v1h-1zM89 1h1v1h-1zM90 0h1v1h-1zM91 1h1v1h-1zM92 2h1v1h-1zM93 1h1v1h-1zM94 0h1v1h-1zM95 1h1v1h-1zM96 2h1v1h-1zM97 1h1v1h-1z" fill="#ff0000" shape-rendering="crispEdges"/></svg><svg style="left:81px;top:149px" width="56" height="3" viewBox="0 0 56 3"><path d="M0 2h1v1h-1zM1 1h1v1h-1zM2 0h1v1h-1zM3 1h1v1h-1zM4 2h1v1h-1zM5 1h1v1h-1zM6 0h1v1h-1zM7 1h1v1h-1zM8 2h1v1h-1zM9 1h1v1h-1zM10 0h1v1h-1zM11 1h1v1h-1zM12 2h1v1h-1zM13 1h1v1h-1zM14 0h1v1h-1zM15 1h1v1h-1zM16 2h1v1h-1zM17 1h1v1h-1zM18 0h1v1h-1zM19 1h1v1h-1zM20 2h1v1h-1zM21 1h1v1h-1zM22 0h1v1h-1zM23 1h1v1h-1zM24 2h1v1h-1zM25 1h1v1h-1zM26 0h1v1h-1zM27 1h1v1h-1zM28 2h1v1h-1zM29 1h1v1h-1zM30 0h1v1h-1zM31 1h1v1h-1zM32 2h1v1h-1zM33 1h1v1h-1zM34 0h1v1h-1zM35 1h1v1h-1zM36 2h1v1h-1zM37 1h1v1h-1zM38 0h1v1h-1zM39 1h1v1h-1zM40 2h1v1h-1zM41 1h1v1h-1zM42 0h1v1h-1zM43 1h1v1h-1zM44 2h1v1h-1zM45 1h1v1h-1zM46 0h1v1h-1zM47 1h1v1h-1zM48 2h1v1h-1zM49 1h1v1h-1zM50 0h1v1h-1zM51 1h1v1h-1zM52 2h1v1h-1zM53 1h1v1h-1zM54 0h1v1h-1zM55 1h1v1h-1z" fill="#ff0000" shape-rendering="crispEdges"/></svg><svg style="left:130px;top:234px" width="56" height="3" viewBox="0 0 56 3"><path d="M0 2h1v1h-1zM1 1h1v1h-1zM2 0h1v1h-1zM3 1h1v1h-1zM4 2h1v1h-1zM5 1h1v1h-1zM6 0h1v1h-1zM7 1h1v1h-1zM8 2h1v1h-1zM9 1h1v1h-1zM10 0h1v1h-1zM11 1h1v1h-1zM12 2h1v1h-1zM13 1h1v1h-1zM14 0h1v1h-1zM15 1h1v1h-1zM16 2h1v1h-1zM17 1h1v1h-1zM18 0h1v1h-1zM19 1h1v1h-1zM20 2h1v1h-1zM21 1h1v1h-1zM22 0h1v1h-1zM23 1h1v1h-1zM24 2h1v1h-1zM25 1h1v1h-1zM26 0h1v1h-1zM27 1h1v1h-1zM28 2h1v1h-1zM29 1h1v1h-1zM30 0h1v1h-1zM31 1h1v1h-1zM32 2h1v1h-1zM33 1h1v1h-1zM34 0h1v1h-1zM35 1h1v1h-1zM36 2h1v1h-1zM37 1h1v1h-1zM38 0h1v1h-1zM39 1h1v1h-1zM40 2h1v1h-1zM41 1h1v1h-1zM42 0h1v1h-1zM43 1h1v1h-1zM44 2h1v1h-1zM45 1h1v1h-1zM46 0h1v1h-1zM47 1h1v1h-1zM48 2h1v1h-1zM49 1h1v1h-1zM50 0h1v1h-1zM51 1h1v1h-1zM52 2h1v1h-1zM53 1h1v1h-1zM54 0h1v1h-1zM55 1h1v1h-1z" fill="#ff0000" shape-rendering="crispEdges"/></svg><svg style="left:319px;top:234px" width="56" height="3" viewBox="0 0 56 3"><path d="M0 2h1v1h-1zM1 1h1v1h-1zM2 0h1v1h-1zM3 1h1v1h-1zM4 2h1v1h-1zM5 1h1v1h-1zM6 0h1v1h-1zM7 1h1v1h-1zM8 2h1v1h-1zM9 1h1v1h-1zM10 0h1v1h-1zM11 1h1v1h-1zM12 2h1v1h-1zM13 1h1v1h-1zM14 0h1v1h-1zM15 1h1v1h-1zM16 2h1v1h-1zM17 1h1v1h-1zM18 0h1v1h-1zM19 1h1v1h-1zM20 2h1v1h-1zM21 1h1v1h-1zM22 0h1v1h-1zM23 1h1v1h-1zM24 2h1v1h-1zM25 1h1v1h-1zM26 0h1v1h-1zM27 1h1v1h-1zM28 2h1v1h-1zM29 1h1v1h-1zM30 0h1v1h-1zM31 1h1v1h-1zM32 2h1v1h-1zM33 1h1v1h-1zM34 0h1v1h-1zM35 1h1v1h-1zM36 2h1v1h-1zM37 1h1v1h-1zM38 0h1v1h-1zM39 1h1v1h-1zM40 2h1v1h-1zM41 1h1v1h-1zM42 0h1v1h-1zM43 1h1v1h-1zM44 2h1v1h-1zM45 1h1v1h-1zM46 0h1v1h-1zM47 1h1v1h-1zM48 2h1v1h-1zM49 1h1v1h-1zM50 0h1v1h-1zM51 1h1v1h-1zM52 2h1v1h-1zM53 1h1v1h-1zM54 0h1v1h-1zM55 1h1v1h-1z" fill="#ff0000" shape-rendering="crispEdges"/></svg><svg style="left:235px;top:251px" width="56" height="3" viewBox="0 0 56 3"><path d="M0 2h1v1h-1zM1 1h1v1h-1zM2 0h1v1h-1zM3 1h1v1h-1zM4 2h1v1h-1zM5 1h1v1h-1zM6 0h1v1h-1zM7 1h1v1h-1zM8 2h1v1h-1zM9 1h1v1h-1zM10 0h1v1h-1zM11 1h1v1h-1zM12 2h1v1h-1zM13 1h1v1h-1zM14 0h1v1h-1zM15 1h1v1h-1zM16 2h1v1h-1zM17 1h1v1h-1zM18 0h1v1h-1zM19 1h1v1h-1zM20 2h1v1h-1zM21 1h1v1h-1zM22 0h1v1h-1zM23 1h1v1h-1zM24 2h1v1h-1zM25 1h1v1h-1zM26 0h1v1h-1zM27 1h1v1h-1zM28 2h1v1h-1zM29 1h1v1h-1zM30 0h1v1h-1zM31 1h1v1h-1zM32 2h1v1h-1zM33 1h1v1h-1zM34 0h1v1h-1zM35 1h1v1h-1zM36 2h1v1h-1zM37 1h1v1h-1zM38 0h1v1h-1zM39 1h1v1h-1zM40 2h1v1h-1zM41 1h1v1h-1zM42 0h1v1h-1zM43 1h1v1h-1zM44 2h1v1h-1zM45 1h1v1h-1zM46 0h1v1h-1zM47 1h1v1h-1zM48 2h1v1h-1zM49 1h1v1h-1zM50 0h1v1h-1zM51 1h1v1h-1zM52 2h1v1h-1zM53 1h1v1h-1zM54 0h1v1h-1zM55 1h1v1h-1z" fill="#ff0000" shape-rendering="crispEdges"/></svg><svg style="left:137px;top:268px" width="56" height="3" viewBox="0 0 56 3"><path d="M0 2h1v1h-1zM1 1h1v1h-1zM2 0h1v1h-1zM3 1h1v1h-1zM4 2h1v1h-1zM5 1h1v1h-1zM6 0h1v1h-1zM7 1h1v1h-1zM8 2h1v1h-1zM9 1h1v1h-1zM10 0h1v1h-1zM11 1h1v1h-1zM12 2h1v1h-1zM13 1h1v1h-1zM14 0h1v1h-1zM15 1h1v1h-1zM16 2h1v1h-1zM17 1h1v1h-1zM18 0h1v1h-1zM19 1h1v1h-1zM20 2h1v1h-1zM21 1h1v1h-1zM22 0h1v1h-1zM23 1h1v1h-1zM24 2h1v1h-1zM25 1h1v1h-1zM26 0h1v1h-1zM27 1h1v1h-1zM28 2h1v1h-1zM29 1h1v1h-1zM30 0h1v1h-1zM31 1h1v1h-1zM32 2h1v1h-1zM33 1h1v1h-1zM34 0h1v1h-1zM35 1h1v1h-1zM36 2h1v1h-1zM37 1h1v1h-1zM38 0h1v1h-1zM39 1h1v1h-1zM40 2h1v1h-1zM41 1h1v1h-1zM42 0h1v1h-1zM43 1h1v1h-1zM44 2h1v1h-1zM45 1h1v1h-1zM46 0h1v1h-1zM47 1h1v1h-1zM48 2h1v1h-1zM49 1h1v1h-1zM50 0h1v1h-1zM51 1h1v1h-1zM52 2h1v1h-1zM53 1h1v1h-1zM54 0h1v1h-1zM55 1h1v1h-1z" fill="#ff0000" shape-rendering="crispEdges"/></svg><svg style="left:333px;top:268px" width="56" height="3" viewBox="0 0 56 3"><path d="M0 2h1v1h-1zM1 1h1v1h-1zM2 0h1v1h-1zM3 1h1v1h-1zM4 2h1v1h-1zM5 1h1v1h-1zM6 0h1v1h-1zM7 1h1v1h-1zM8 2h1v1h-1zM9 1h1v1h-1zM10 0h1v1h-1zM11 1h1v1h-1zM12 2h1v1h-1zM13 1h1v1h-1zM14 0h1v1h-1zM15 1h1v1h-1zM16 2h1v1h-1zM17 1h1v1h-1zM18 0h1v1h-1zM19 1h1v1h-1zM20 2h1v1h-1zM21 1h1v1h-1zM22 0h1v1h-1zM23 1h1v1h-1zM24 2h1v1h-1zM25 1h1v1h-1zM26 0h1v1h-1zM27 1h1v1h-1zM28 2h1v1h-1zM29 1h1v1h-1zM30 0h1v1h-1zM31 1h1v1h-1zM32 2h1v1h-1zM33 1h1v1h-1zM34 0h1v1h-1zM35 1h1v1h-1zM36 2h1v1h-1zM37 1h1v1h-1zM38 0h1v1h-1zM39 1h1v1h-1zM40 2h1v1h-1zM41 1h1v1h-1zM42 0h1v1h-1zM43 1h1v1h-1zM44 2h1v1h-1zM45 1h1v1h-1zM46 0h1v1h-1zM47 1h1v1h-1zM48 2h1v1h-1zM49 1h1v1h-1zM50 0h1v1h-1zM51 1h1v1h-1zM52 2h1v1h-1zM53 1h1v1h-1zM54 0h1v1h-1zM55 1h1v1h-1z" fill="#ff0000" shape-rendering="crispEdges"/></svg><svg style="left:137px;top:285px" width="56" height="3" viewBox="0 0 56 3"><path d="M0 2h1v1h-1zM1 1h1v1h-1zM2 0h1v1h-1zM3 1h1v1h-1zM4 2h1v1h-1zM5 1h1v1h-1zM6 0h1v1h-1zM7 1h1v1h-1zM8 2h1v1h-1zM9 1h1v1h-1zM10 0h1v1h-1zM11 1h1v1h-1zM12 2h1v1h-1zM13 1h1v1h-1zM14 0h1v1h-1zM15 1h1v1h-1zM16 2h1v1h-1zM17 1h1v1h-1zM18 0h1v1h-1zM19 1h1v1h-1zM20 2h1v1h-1zM21 1h1v1h-1zM22 0h1v1h-1zM23 1h1v1h-1zM24 2h1v1h-1zM25 1h1v1h-1zM26 0h1v1h-1zM27 1h1v1h-1zM28 2h1v1h-1zM29 1h1v1h-1zM30 0h1v1h-1zM31 1h1v1h-1zM32 2h1v1h-1zM33 1h1v1h-1zM34 0h1v1h-1zM35 1h1v1h-1zM36 2h1v1h-1zM37 1h1v1h-1zM38 0h1v1h-1zM39 1h1v1h-1zM40 2h1v1h-1zM41 1h1v1h-1zM42 0h1v1h-1zM43 1h1v1h-1zM44 2h1v1h-1zM45 1h1v1h-1zM46 0h1v1h-1zM47 1h1v1h-1zM48 2h1v1h-1zM49 1h1v1h-1zM50 0h1v1h-1zM51 1h1v1h-1zM52 2h1v1h-1zM53 1h1v1h-1zM54 0h1v1h-1zM55 1h1v1h-1z" fill="#ff0000" shape-rendering="crispEdges"/></svg><div class="a" style="left:47px;top:47px;width:1px;height:36px;background:#808080"></div><div class="a" style="left:47px;top:83px;width:5px;height:1px;background:#808080"></div><div class="a" style="left:47px;top:132px;width:1px;height:36px;background:#808080"></div><div class="a" style="left:47px;top:168px;width:5px;height:1px;background:#808080"></div><div class="a" style="left:47px;top:200px;width:1px;height:114px;background:#808080"></div><div class="a" style="left:47px;top:304px;width:5px;height:1px;background:#808080"></div><div class="a" style="left:43px;top:38px;width:9px;height:9px;border:1px solid #808080;background:#fff"></div><div class="a" style="left:45px;top:42px;width:5px;height:1px;background:#808080"></div><div class="a" style="left:43px;top:123px;width:9px;height:9px;border:1px solid #808080;background:#fff"></div><div class="a" style="left:45px;top:127px;width:5px;height:1px;background:#808080"></div><div class="a" style="left:43px;top:191px;width:9px;height:9px;border:1px solid #808080;background:#fff"></div><div class="a" style="left:45px;top:195px;width:5px;height:1px;background:#808080"></div><div class="a" style="left:43px;top:208px;width:9px;height:9px;border:1px solid #808080;background:#fff"></div><div class="a" style="left:45px;top:212px;width:5px;height:1px;background:#808080"></div><div class="a" style="left:43px;top:225px;width:9px;height:9px;border:1px solid #808080;background:#fff"></div><div class="a" style="left:45px;top:229px;width:5px;height:1px;background:#808080"></div></div><div class="a" style="left:10px;top:583px;width:972px;height:18px;background:#e8e8e8"></div><div class="a" style="left:7px;top:601px;width:975px;height:3px;background:#161b2b"></div><div class="a" style="left:10px;top:604px;width:972px;height:24px;background:#b3b3b3"></div><div class="a" style="left:10px;top:628px;width:972px;height:3px;background:#f0f0f0"></div><div class="a" style="left:10px;top:631px;width:972px;height:24px;background:#cbcbcb"></div><div class="a" style="left:10px;top:655px;width:972px;height:1px;background:#6e6e6e"></div><div class="a" style="left:16px;top:634px;width:71px;height:22px;background:linear-gradient(#ececec,#e4e4e4 50%,#dadada 54%,#d8d8d8);border:1px solid #6e6e6e;box-shadow:inset 1px 1px 0 #f6f6f6"></div><div class="t" style="left:27px;top:636px;font-size:15px;font-weight:bold;color:#5a5a5a">常规</div><div class="a" style="left:89px;top:634px;width:94px;height:22px;background:linear-gradient(#ececec,#e4e4e4 50%,#dadada 54%,#d8d8d8);border:1px solid #6e6e6e;box-shadow:inset 1px 1px 0 #f6f6f6"></div><div class="t" style="left:100px;top:636px;font-size:15px;font-weight:bold;color:#5a5a5a">交叉引用</div><div class="a" style="left:184px;top:634px;width:63px;height:22px;background:linear-gradient(#ececec,#e4e4e4 50%,#dadada 54%,#d8d8d8);border:1px solid #6e6e6e;box-shadow:inset 1px 1px 0 #f6f6f6"></div><div class="t" style="left:195px;top:636px;font-size:15px;font-weight:bold;color:#5a5a5a">编译</div><div class="a" style="left:248px;top:634px;width:63px;height:23px;background:linear-gradient(#f8f8f8,#efefef);border:1px solid #6e6e6e;border-bottom:none;box-shadow:inset 1px 1px 0 #ffffff"></div><div class="t" style="left:260px;top:636px;font-size:15px;font-weight:bold;color:#000">语法</div><svg style="left:68px;top:638px" width="16" height="16" viewBox="0 0 16 16">
<defs><radialGradient id="ig" cx="0.45" cy="0.45" r="0.6"><stop offset="0" stop-color="#fffcb0"/><stop offset="0.6" stop-color="#f8e030"/><stop offset="1" stop-color="#e0b800"/></radialGradient></defs>
<path d="M5 2H10L13 5V10L10 13H5L2 10V5Z" fill="#7080a0" transform="translate(1,1)"/>
<path d="M4.5 1H9.5L13 4.5V9.5L9.5 13H4.5L1 9.5V4.5Z" fill="url(#ig)"/>
<rect x="6" y="2.6" width="2" height="2" fill="#000"/><path d="M5 5.6H8V10.3H9V11.5H5V10.3H6V6.8H5Z" fill="#000"/>
</svg><div class="a" style="left:10px;top:656px;width:972px;height:22px;background:#efefef"></div><div class="a" style="left:10px;top:678px;width:972px;height:1px;background:#b0b0b0"></div><div class="a" style="left:10px;top:679px;width:972px;height:17px;background:linear-gradient(#f5f5f5,#dedede 50%,#cbcbcb 56%,#e2e2e2)"></div><div class="a" style="left:10px;top:696px;width:972px;height:1px;background:#b0b0b0"></div><div class="a" style="left:38px;top:679px;width:1px;height:17px;background:#b4b4b4"></div><div class="a" style="left:238px;top:679px;width:1px;height:17px;background:#b4b4b4"></div><div class="a" style="left:838px;top:679px;width:1px;height:17px;background:#b4b4b4"></div><div class="t" style="left:16px;top:682px;color:#c07020;font-size:12px">!</div><div class="t" style="left:43px;top:680px;font-size:13px">位置</div><div class="t" style="left:243px;top:680px;font-size:13px">消息</div><div class="a" style="left:10px;top:697px;width:972px;height:201px;background:#efefef"></div><div class="a" style="left:10px;top:697px;width:972px;height:1px;background:#fafafa"></div><svg style="left:16px;top:699px" width="16" height="16" viewBox="0 0 16 16">
<circle cx="8" cy="8" r="7.7" fill="#ec0a0a"/>
<path d="M4.6 4.6L11.4 11.4M11.4 4.6L4.6 11.4" stroke="#fff" stroke-width="2.4"/>
</svg><div class="t" style="left:63px;top:702px;font-size:12px">1</div><div class="t" style="left:243px;top:701px;font-size:12px">操作数BEGIN 未定义。</div><div class="a" style="left:10px;top:716px;width:972px;height:1px;background:#fafafa"></div><svg style="left:16px;top:718px" width="16" height="16" viewBox="0 0 16 16">
<circle cx="8" cy="8" r="7.7" fill="#ec0a0a"/>
<path d="M4.6 4.6L11.4 11.4M11.4 4.6L4.6 11.4" stroke="#fff" stroke-width="2.4"/>
</svg><div class="t" style="left:63px;top:721px;font-size:12px">1</div><div class="t" style="left:243px;top:720px;font-size:12px">未知指令。</div><div class="a" style="left:10px;top:735px;width:972px;height:1px;background:#fafafa"></div><svg style="left:16px;top:737px" width="16" height="16" viewBox="0 0 16 16">
<circle cx="8" cy="8" r="7.7" fill="#ec0a0a"/>
<path d="M4.6 4.6L11.4 11.4M11.4 4.6L4.6 11.4" stroke="#fff" stroke-width="2.4"/>
</svg><div class="t" style="left:63px;top:740px;font-size:12px">6</div><div class="t" style="left:243px;top:739px;font-size:12px">操作数Realtime_Value 未定义。</div><div class="a" style="left:10px;top:754px;width:972px;height:1px;background:#fafafa"></div><svg style="left:16px;top:756px" width="16" height="16" viewBox="0 0 16 16">
<circle cx="8" cy="8" r="7.7" fill="#ec0a0a"/>
<path d="M4.6 4.6L11.4 11.4M11.4 4.6L4.6 11.4" stroke="#fff" stroke-width="2.4"/>
</svg><div class="t" style="left:63px;top:759px;font-size:12px">9</div><div class="t" style="left:243px;top:758px;font-size:12px">操作数Data_tmp 未定义。</div><div class="a" style="left:10px;top:773px;width:972px;height:1px;background:#fafafa"></div><svg style="left:16px;top:775px" width="16" height="16" viewBox="0 0 16 16">
<circle cx="8" cy="8" r="7.7" fill="#ec0a0a"/>
<path d="M4.6 4.6L11.4 11.4M11.4 4.6L4.6 11.4" stroke="#fff" stroke-width="2.4"/>
</svg><div class="t" style="left:63px;top:778px;font-size:12px">14</div><div class="t" style="left:243px;top:777px;font-size:12px">操作数data_tmp 未定义。</div><div class="a" style="left:10px;top:792px;width:972px;height:1px;background:#fafafa"></div><svg style="left:16px;top:794px" width="16" height="16" viewBox="0 0 16 16">
<circle cx="8" cy="8" r="7.7" fill="#ec0a0a"/>
<path d="M4.6 4.6L11.4 11.4M11.4 4.6L4.6 11.4" stroke="#fff" stroke-width="2.4"/>
</svg><div class="t" style="left:63px;top:797px;font-size:12px">14</div><div class="t" style="left:243px;top:796px;font-size:12px">操作数data_tmp 未定义。</div><div class="a" style="left:10px;top:811px;width:972px;height:1px;background:#fafafa"></div><svg style="left:16px;top:813px" width="16" height="16" viewBox="0 0 16 16">
<circle cx="8" cy="8" r="7.7" fill="#ec0a0a"/>
<path d="M4.6 4.6L11.4 11.4M11.4 4.6L4.6 11.4" stroke="#fff" stroke-width="2.4"/>
</svg><div class="t" style="left:63px;top:816px;font-size:12px">15</div><div class="t" style="left:243px;top:815px;font-size:12px">操作数data_tmp 未定义。</div><div class="a" style="left:10px;top:830px;width:972px;height:1px;background:#fafafa"></div><svg style="left:16px;top:832px" width="16" height="16" viewBox="0 0 16 16">
<circle cx="8" cy="8" r="7.7" fill="#ec0a0a"/>
<path d="M4.6 4.6L11.4 11.4M11.4 4.6L4.6 11.4" stroke="#fff" stroke-width="2.4"/>
</svg><div class="t" style="left:63px;top:835px;font-size:12px">16</div><div class="t" style="left:243px;top:834px;font-size:12px">操作数data_tmp 未定义。</div><div class="a" style="left:10px;top:849px;width:972px;height:1px;background:#fafafa"></div><svg style="left:16px;top:851px" width="16" height="16" viewBox="0 0 16 16">
<circle cx="8" cy="8" r="7.7" fill="#ec0a0a"/>
<path d="M4.6 4.6L11.4 11.4M11.4 4.6L4.6 11.4" stroke="#fff" stroke-width="2.4"/>
</svg><div class="t" style="left:63px;top:854px;font-size:12px">16</div><div class="t" style="left:243px;top:853px;font-size:12px">操作数data_tmp 未定义。</div><div class="a" style="left:10px;top:868px;width:972px;height:1px;background:#fafafa"></div><svg style="left:16px;top:870px" width="16" height="16" viewBox="0 0 16 16">
<circle cx="8" cy="8" r="7.7" fill="#ec0a0a"/>
<path d="M4.6 4.6L11.4 11.4M11.4 4.6L4.6 11.4" stroke="#fff" stroke-width="2.4"/>
</svg><div class="t" style="left:63px;top:873px;font-size:12px">17</div><div class="t" style="left:243px;top:872px;font-size:12px">操作数data_tmp 未定义。</div><div class="a" style="left:10px;top:887px;width:972px;height:1px;background:#fafafa"></div><svg style="left:16px;top:889px" width="16" height="16" viewBox="0 0 16 16">
<circle cx="8" cy="8" r="7.7" fill="#ec0a0a"/>
<path d="M4.6 4.6L11.4 11.4M11.4 4.6L4.6 11.4" stroke="#fff" stroke-width="2.4"/>
</svg><div class="t" style="left:63px;top:892px;font-size:12px">22</div><div class="t" style="left:243px;top:891px;font-size:12px">操作数Filted_Value 未定义。</div></body></html>
